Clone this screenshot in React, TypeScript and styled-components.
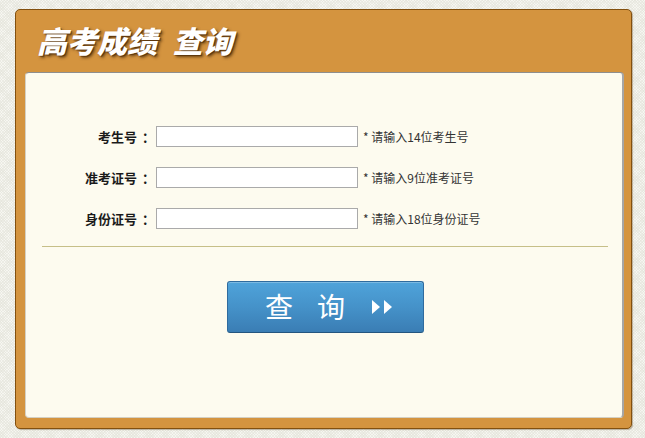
import React from "react";
import styled, { createGlobalStyle } from "styled-components";

const Global = createGlobalStyle`
  html, body { margin: 0; padding: 0; }
  body {
    width: 645px;
    height: 438px;
    overflow: hidden;
    background-color: #f6f6f1;
    background-image:
      repeating-linear-gradient(45deg, rgba(225, 225, 215, 0.5) 0 1px, transparent 1px 2px),
      repeating-linear-gradient(-45deg, rgba(225, 225, 215, 0.5) 0 1px, transparent 1px 2px);
    font-family: "Noto Sans CJK SC", "Noto Sans", sans-serif;
  }
`;

const Frame = styled.div`
  box-sizing: border-box;
  margin: 9px 0 0 15px;
  width: 617px;
  height: 420px;
  background: #d4943f;
  border: 1px solid #82500f;
  border-radius: 5px;
  box-shadow: 1px 1px 1px rgba(90, 60, 20, 0.35);
  display: flex;
  flex-direction: column;
`;

const Header = styled.div`
  height: 62px;
  display: flex;
  align-items: center;
  padding: 0 0 2px 21px;
  box-sizing: border-box;
`;

const Title = styled.h1`
  margin: 0;
  color: #fff;
  font-family: "Noto Sans CJK SC", sans-serif;
  font-weight: 900;
  font-style: italic;
  font-size: 30px;
  line-height: 1;
  word-spacing: 9px;
  text-shadow: 2px 2px 3px rgba(60, 30, 0, 0.7), 1px 1px 0 rgba(80, 40, 0, 0.5);
`;

const Panel = styled.div`
  flex: 1;
  margin: 0 7px 10px 9px;
  background: #fdfbef;
  border: 1px solid #d4d0c4;
  border-top-color: #8e8e8e;
  border-right: 2px solid #a6a6a6;
  border-radius: 4px;
  padding-top: 53px;
  box-sizing: border-box;
`;

const Fields = styled.div`
  display: flex;
  flex-direction: column;
  gap: 20px;
`;

const Row = styled.div`
  display: flex;
  align-items: center;
  height: 21px;
`;

const Label = styled.label`
  width: 123px;
  text-align: right;
  font-size: 13px;
  font-weight: 700;
  color: #1a1a1a;
  margin-right: 7px;
  white-space: nowrap;
`;

const Colon = styled.span`
  display: inline-block;
  width: 7px;
  margin-left: 5px;
  text-align: left;
`;

const Input = styled.input`
  box-sizing: border-box;
  width: 202px;
  height: 21px;
  border: 1px solid #aaaaaa;
  background: #fff;
  padding: 0 3px;
  margin: 0;
  outline: none;
`;

const Hint = styled.span`
  margin-left: 5px;
  font-size: 12px;
  color: #333;
  white-space: nowrap;
`;

const Divider = styled.div`
  height: 1px;
  background: #c6bf88;
  margin: 17px 14px 0 16px;
`;

const ButtonWrap = styled.div`
  display: flex;
  justify-content: center;
  margin-top: 34px;
  padding-left: 2px;
`;

const SearchButton = styled.button`
  box-sizing: border-box;
  width: 197px;
  height: 52px;
  border: 1px solid #2f6b9e;
  border-bottom-color: #23557f;
  border-radius: 3px;
  background: linear-gradient(to bottom, #4fa3da 0%, #4592c9 50%, #3a7db4 100%);
  box-shadow: inset 0 1px 0 rgba(255, 255, 255, 0.25);
  color: #fff;
  display: flex;
  align-items: center;
  justify-content: center;
  padding: 0 0 0 8px;
  cursor: pointer;
  font-family: "Noto Sans CJK SC", sans-serif;
`;

const ButtonText = styled.span`
  font-size: 28px;
  letter-spacing: 24px;
  line-height: 1;
  margin-top: -2px;
`;

const Arrows = styled.svg`
  display: block;
  margin-left: 3px;
`;

const fields = [
  { label: "考生号", hint: "* 请输入14位考生号" },
  { label: "准考证号", hint: "* 请输入9位准考证号" },
  { label: "身份证号", hint: "* 请输入18位身份证号" },
];

export default function App() {
  return (
    <>
      <Global />
      <Frame>
        <Header>
          <Title>高考成绩 查询</Title>
        </Header>
        <Panel>
          <Fields>
            {fields.map((f) => (
              <Row key={f.label}>
                <Label>
                  {f.label}
                  <Colon>：</Colon>
                </Label>
                <Input type="text" />
                <Hint>{f.hint}</Hint>
              </Row>
            ))}
          </Fields>
          <Divider />
          <ButtonWrap>
            <SearchButton type="button">
              <ButtonText>查询</ButtonText>
              <Arrows width="21" height="14" viewBox="0 0 21 14">
                <polygon points="0,0 8,7 0,14" fill="#fff" />
                <polygon points="12,0 20,7 12,14" fill="#fff" />
              </Arrows>
            </SearchButton>
          </ButtonWrap>
        </Panel>
      </Frame>
    </>
  );
}
